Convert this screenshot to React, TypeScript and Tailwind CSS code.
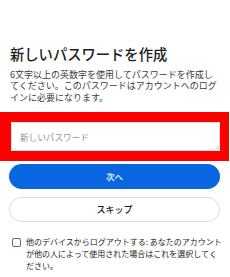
import React from "react";

export default function App() {
  return (
    <div
      className="w-[230px] h-[277px] bg-white overflow-hidden text-[#1c1e21]"
      style={{ fontFamily: '"Noto Sans CJK JP", "Noto Sans", sans-serif' }}
    >
      <div className="pt-[44px] pl-[10px] pr-[11px]">
        <h1 className="h-[20px] text-[14.3px] leading-[20px] font-medium text-[#1c1e21] whitespace-nowrap">
          新しいパスワードを作成
        </h1>
        <p className="mt-[5px] h-[34px] text-[9px] leading-[11.3px] text-[#3a3b3c]">
          6文字以上の英数字を使用してパスワードを作成してください。このパスワードはアカウントへのログインに必要になります。
        </p>
      </div>
      <div className="mt-[9px] mr-[1px] h-[49px] border-t-[10px] border-b-[10px] border-l-[11px] border-r-[9px] border-[#ff0000]">
        <div className="relative h-[29px]">
          <textarea
            placeholder="新しいパスワード"
            className="block w-full h-[29px] resize-none rounded-[3px] border border-[#dddfe2] bg-white pl-[8px] pr-[4px] py-[7px] text-[8.6px] leading-[14px] placeholder:text-[#8d949e] outline-none"
          />
          <svg
            className="absolute right-[1px] bottom-[1px] pointer-events-none"
            width="5"
            height="5"
            viewBox="0 0 5 5"
          >
            <path d="M1 5 L5 1 M3 5 L5 3" stroke="#b8bcc2" strokeWidth="0.7" />
          </svg>
        </div>
      </div>
      <div className="pl-[9px] pr-[10px] mt-[3px] flex flex-col gap-[8px]">
        <button className="h-[25px] rounded-full bg-[#0866e0] text-white text-[8.5px] font-medium flex items-center justify-center">
          次へ
        </button>
        <button className="h-[25px] rounded-full border border-[#dadde1] bg-white text-[#1c1e21] text-[9px] font-medium flex items-center justify-center">
          スキップ
        </button>
      </div>
      <div className="flex items-start mt-[14px] pl-[12px] pr-[8px] gap-[5px]">
        <div className="mt-[1.5px] w-[9px] h-[9px] shrink-0 rounded-[2px] border border-[#65676b]" />
        <p className="text-[8px] leading-[12px] text-[#1c1e21]">
          他のデバイスからログアウトする: あなたのアカウントが他の人によって使用された場合はこれを選択してください。
        </p>
      </div>
    </div>
  );
}
